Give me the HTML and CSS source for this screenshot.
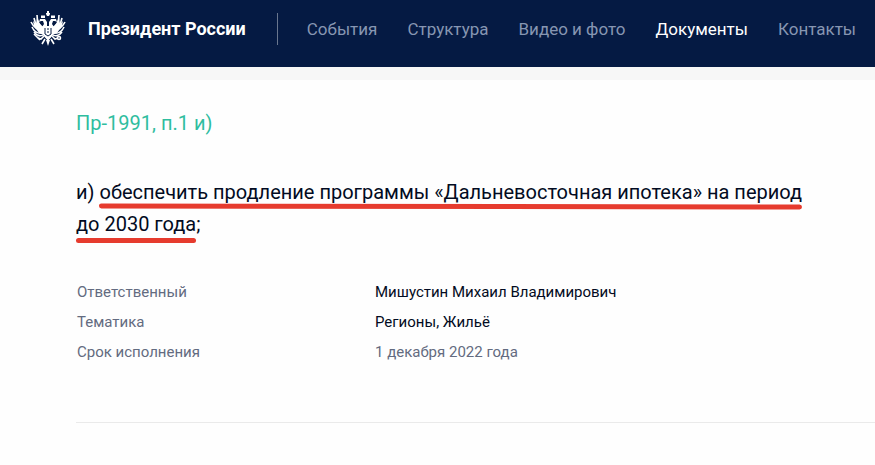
FILE: index.html
```html
<!DOCTYPE html>
<html lang="ru">
<head>
<meta charset="utf-8">
<meta name="viewport" content="width=device-width, initial-scale=1">
<title>Президент России</title>
<link rel="stylesheet" href="styles.css">
</head>
<body>
<header class="site-header">
  <a class="brand" href="#">
    <svg class="emblem" viewBox="0 0 36 36" aria-hidden="true">
      <g fill="#fff">
        <path d="M17 0h2v2h1v1l-1 2h-2l-1-2V2h1z"/>
        <path d="M11 4l1 1 1-1 1 1 1-1v3h-4zM21 4l1 1 1-1 1 1 1-1v3h-4z"/>
        <path d="M10 8h5l2 3v4h2v-4l2-3h5l1 3-2-1h-2l-1 3 2 3-1 8-5 6-5-6-1-8 2-3-1-3h-2l-2 1z"/>
        <path d="M16 29h4l-2 6z"/>
        <path d="M7 6l2 6 5 5v6l-5-1-5-7-1-5 3 3z"/>
        <path d="M29 6l-2 6-5 5v6l5-1 5-7 1-5-3 3z"/>
      </g>
      <g fill="none" stroke="#fff" stroke-width="1.6">
        <path d="M14 17C9 15 7 11 7 4M14 18C8 17 5 13 4 7M14 20C8 20 4 17 1 11M14 22C9 23 4 21 2 16M14 23C11 26 7 25 4 21"/>
        <path d="M22 17c5-2 7-6 7-13M22 18c6-1 9-5 10-11M22 20c6 0 10-3 13-9M22 22c5 1 10-1 12-6M22 23c3 3 7 2 10-2"/>
        <path d="M14 25l-3 3-3-1M22 25l3 3 3-1M15 28l-3 5M21 28l3 5"/>
        <path d="M10 29L4 23"/>
        <circle cx="29" cy="27" r="1.5"/>
      </g>
      <g fill="none" stroke="#051a43">
        <path d="M15 17v6l3 2 3-2v-6M17 18h2M17 21h2"/>
      </g>
    </svg>
    <span class="brand-name">Президент России</span>
  </a>
  <nav class="main-nav">
    <a href="#">События</a>
    <a href="#">Структура</a>
    <a href="#">Видео и фото</a>
    <a class="current" href="#" aria-current="page">Документы</a>
    <a href="#">Контакты</a>
  </nav>
</header>
<main class="document">
  <h1 class="doc-number"><a href="#">Пр-1991, п.1 и)</a></h1>
  <p class="doc-text">и) <span class="marked marked-long">обеспечить продление программы «Дальневосточная ипотека» на период</span><br><span class="marked">до 2030 года</span>;</p>
  <dl class="details">
    <dt>Ответственный</dt><dd><a href="#">Мишустин Михаил Владимирович</a></dd>
    <dt>Тематика</dt><dd><a href="#">Регионы, Жильё</a></dd>
    <dt>Срок исполнения</dt><dd>1 декабря 2022 года</dd>
  </dl>
</main>
</body>
</html>
```
FILE: styles.css
```css
* { box-sizing: border-box; }
body {
  margin: 0;
  background: #fefefe;
  color: #051a43;
  font-family: Roboto, "Liberation Sans", sans-serif;
}
a { color: inherit; text-decoration: none; }
.site-header {
  display: flex;
  align-items: center;
  padding: 0 18px 10px 30px;
  height: 67px;
  background: #051a43;
  box-shadow: 0 13px #f7f7f7;
  font-size: 18px;
  line-height: 24px;
  white-space: nowrap;
}
.brand {
  display: flex;
  align-items: center;
  gap: 22px;
  color: #fff;
  font-weight: 700;
}
.emblem { width: 36px; height: 36px; }
.main-nav {
  display: flex;
  align-items: center;
  gap: 30px;
  height: 32px;
  margin-left: 31px;
  padding-left: 29px;
  border-left: 1px solid #69768e;
  color: #8796b2;
  font-size: 17px;
}
.main-nav .current { color: #fff; }
.document {
  margin: 40px 0 0 76px;
  border-bottom: 1px solid #eaeaea;
  padding-bottom: 58px;
}
.doc-number {
  margin: 0;
  color: #2fbd9f;
  font-size: 20px;
  font-weight: 400;
  line-height: 32px;
}
.doc-text {
  margin: 37px 0 0;
  color: #020b22;
  font-size: 20px;
  line-height: 32px;
}
.marked { position: relative; display: inline-block; }
.marked::after {
  content: "";
  position: absolute;
  left: 0;
  right: 0;
  bottom: -3px;
  height: 5px;
  border-radius: 3px;
  background: #e63b2e;
}
.marked-long::after {
  bottom: -1px;
  transform: rotate(0.1deg);
}
.details {
  display: grid;
  grid-template-columns: 298px 1fr;
  row-gap: 6px;
  margin: 40px 0 0;
  padding-left: 1px;
  color: #636b80;
  font-size: 15px;
  line-height: 24px;
}
.details dd { margin: 0; }
.details a { color: #020b22; }
```
